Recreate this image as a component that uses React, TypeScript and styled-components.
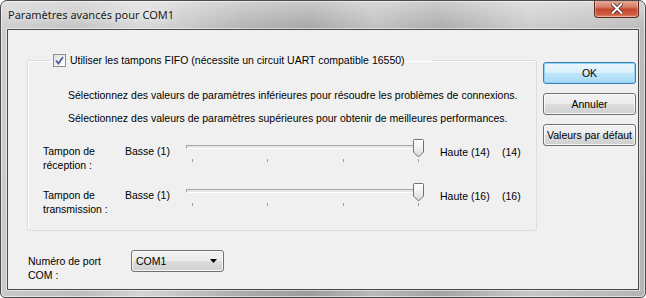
import React from 'react'
import styled, { createGlobalStyle } from 'styled-components'

const GlobalStyle = createGlobalStyle`
  html, body {
    margin: 0;
    padding: 0;
    background: #ffffff;
  }
  body {
    font-family: 'Liberation Sans', Arial, sans-serif;
    font-size: 10.5px;
    color: #000;
  }
`

const Window = styled.div`
  width: 646px;
  height: 298px;
  box-sizing: border-box;
  display: flex;
  flex-direction: column;
  border: 1px solid #4b4b4b;
  border-radius: 7px 7px 5px 5px;
  background:
    linear-gradient(180deg, rgba(255, 255, 255, 0.45) 0px, rgba(255, 255, 255, 0.1) 28px, rgba(255, 255, 255, 0) 100%),
    linear-gradient(90deg, #c9c9c9 0%, #bdbdbd 12%, #d4d4d4 22%, #aaaaaa 38%, #9d9d9d 48%, #b9b9b9 58%, #a3a3a3 68%, #c6c6c6 82%, #b4b4b4 100%);
  box-shadow: inset 0 0 0 1px rgba(255, 255, 255, 0.55);
  overflow: hidden;
`

const TitleBar = styled.div`
  height: 28px;
  flex-shrink: 0;
  display: flex;
  justify-content: space-between;
  align-items: flex-start;
  padding-left: 7px;
`

const Title = styled.span`
  margin-top: 6px;
  font-family: 'Noto Sans', 'Open Sans', sans-serif;
  font-size: 11px;
  color: #1a1a1a;
  text-shadow: 0 0 6px rgba(255, 255, 255, 0.9);
`

const CloseButton = styled.div`
  width: 45px;
  height: 18px;
  margin-top: -1px;
  margin-right: 6px;
  box-sizing: border-box;
  display: flex;
  align-items: center;
  justify-content: center;
  border: 1px solid #5b2a22;
  border-top: none;
  border-radius: 0 0 4px 4px;
  background: linear-gradient(180deg, #e9ad9d 0%, #d7806a 40%, #c4472e 55%, #cf5d40 85%, #e08c68 100%);
  box-shadow: inset 0 0 0 1px rgba(255, 255, 255, 0.35);
`

const Client = styled.div`
  flex: 1;
  min-height: 0;
  margin: 0 6px 7px 6px;
  display: flex;
  align-items: flex-start;
  gap: 6px;
  padding: 24px 2px 0 19px;
  border: 1px solid #4a4a4a;
  background: #f0f0f0;
  box-shadow: 0 0 0 1px rgba(255, 255, 255, 0.5);
  white-space: nowrap;
`

const MainColumn = styled.div`
  width: 510px;
  flex-shrink: 0;
  display: flex;
  flex-direction: column;
`

const GroupBox = styled.fieldset`
  margin: 0;
  padding: 0 0 14px 15px;
  border: 1px solid #d5dfe5;
  border-radius: 3px;
  box-shadow: inset 1px 1px 0 #ffffff;
`

const Legend = styled.legend`
  margin-left: 8px;
  padding: 0 27px 0 2px;
  display: flex;
  align-items: center;
  gap: 4px;
  height: 13px;
  line-height: 13px;
`

const CheckBox = styled.span`
  width: 13px;
  height: 13px;
  box-sizing: border-box;
  display: flex;
  align-items: center;
  justify-content: center;
  border: 1px solid #8e8f8f;
  background: linear-gradient(135deg, #dcdcdc 0%, #f4f4f4 60%, #ffffff 100%);
`

const Hint = styled.p<{ $gap: number }>`
  margin: ${(p) => p.$gap}px 0 0 25px;
  line-height: 14px;
`

const SliderRow = styled.div<{ $gap: number }>`
  margin-top: ${(p) => p.$gap}px;
  display: grid;
  grid-template-columns: 82px 61px 254px 62px auto;
  line-height: 14px;
`

const ValueText = styled.span`
  padding-top: 1px;
`

const SliderBox = styled.div`
  position: relative;
  width: 238px;
  height: 28px;
`

const Track = styled.div`
  margin-top: 1px;
  height: 2px;
  border-top: 1px solid #a7a7a7;
  border-left: 1px solid #a7a7a7;
  border-bottom: 1px solid #ffffff;
  border-right: 1px solid #ffffff;
  background: #e6e6e6;
`

const Ticks = styled.div`
  display: flex;
  justify-content: space-between;
  padding: 0 5px 0 6px;
  margin-top: 10px;
`

const Tick = styled.span`
  width: 1px;
  height: 3px;
  background: #a0a0a0;
`

const Thumb = styled.svg`
  position: absolute;
  top: -5px;
`

const ButtonColumn = styled.div`
  margin-top: 8px;
  display: flex;
  flex-direction: column;
  gap: 9px;
`

const Button = styled.button<{ $primary?: boolean }>`
  width: 93px;
  height: 22px;
  padding: 0;
  font-family: inherit;
  font-size: 10.5px;
  color: #000;
  border-radius: 3px;
  border: 1px solid ${(p) => (p.$primary ? '#3c7fb1' : '#707070')};
  background: ${(p) =>
    p.$primary
      ? 'linear-gradient(180deg, #eaf6fd 0%, #d9f0fc 50%, #bee6fd 51%, #a7d9f5 100%)'
      : 'linear-gradient(180deg, #f2f2f2 0%, #ebebeb 50%, #dddddd 51%, #cfcfcf 100%)'};
  box-shadow: inset 0 0 0 1px ${(p) => (p.$primary ? '#90d4f5' : 'rgba(255,255,255,0.8)')};
`

const PortRow = styled.div`
  margin-top: 19px;
  margin-left: 1px;
  display: flex;
  align-items: flex-start;
`

const PortLabel = styled.span`
  width: 103px;
  margin-top: 4px;
  line-height: 14px;
`

const Select = styled.div`
  width: 93px;
  height: 22px;
  box-sizing: border-box;
  display: flex;
  align-items: center;
  justify-content: space-between;
  padding: 0 6px 0 4px;
  border: 1px solid #707070;
  border-radius: 3px;
  background: linear-gradient(180deg, #f2f2f2 0%, #ebebeb 50%, #dddddd 51%, #cfcfcf 100%);
  box-shadow: inset 0 0 0 1px rgba(255, 255, 255, 0.8);
`

const Slider: React.FC<{ value: number; min: number; max: number }> = ({ value, min, max }) => {
  const left = 227 * ((value - min) / (max - min))
  return (
    <SliderBox>
      <Track />
      <Ticks>
        <Tick />
        <Tick />
        <Tick />
        <Tick />
      </Ticks>
      <Thumb width="11" height="19" viewBox="0 0 11 19" style={{ left }}>
        <defs>
          <linearGradient id="thumbGrad" x1="0" y1="0" x2="0" y2="1">
            <stop offset="0" stopColor="#ffffff" />
            <stop offset="0.5" stopColor="#f0f0f0" />
            <stop offset="1" stopColor="#d8d8d8" />
          </linearGradient>
        </defs>
        <path
          d="M1.5 0.5 H9.5 Q10.5 0.5 10.5 1.5 V13 L5.5 18 L0.5 13 V1.5 Q0.5 0.5 1.5 0.5 Z"
          fill="url(#thumbGrad)"
          stroke="#707070"
        />
      </Thumb>
    </SliderBox>
  )
}

const rows = [
  { top: 19, label: ['Tampon de', 'réception :'], max: 14 },
  { top: 16, label: ['Tampon de', 'transmission :'], max: 16 },
]

const App: React.FC = () => {
  return (
    <>
      <GlobalStyle />
      <Window>
        <TitleBar>
          <Title>Paramètres avancés pour COM1</Title>
          <CloseButton>
            <svg width="12" height="11" viewBox="0 0 12 11">
              <path
                d="M1.5 1 L10.5 10 M10.5 1 L1.5 10"
                stroke="#4a2018"
                strokeWidth="3.6"
                strokeLinecap="round"
              />
              <path
                d="M1.5 1 L10.5 10 M10.5 1 L1.5 10"
                stroke="#ffffff"
                strokeWidth="2"
                strokeLinecap="round"
              />
            </svg>
          </CloseButton>
        </TitleBar>
        <Client>
          <MainColumn>
            <GroupBox>
              <Legend>
                <CheckBox>
                  <svg width="9" height="9" viewBox="0 0 9 9">
                    <path d="M1 4.5 L3.5 7.5 L8 1" fill="none" stroke="#4a5f97" strokeWidth="1.8" />
                  </svg>
                </CheckBox>
                Utiliser les tampons FIFO (nécessite un circuit UART compatible 16550)
              </Legend>
              <Hint $gap={21}>
                Sélectionnez des valeurs de paramètres inférieures pour résoudre les problèmes de connexions.
              </Hint>
              <Hint $gap={9}>
                Sélectionnez des valeurs de paramètres supérieures pour obtenir de meilleures performances.
              </Hint>
              {rows.map((r) => (
                <SliderRow key={r.max} $gap={r.top}>
                  <span>
                    {r.label[0]}
                    <br />
                    {r.label[1]}
                  </span>
                  <span>Basse (1)</span>
                  <Slider value={r.max} min={1} max={r.max} />
                  <ValueText>Haute ({r.max})</ValueText>
                  <ValueText>({r.max})</ValueText>
                </SliderRow>
              ))}
            </GroupBox>
            <PortRow>
              <PortLabel>
                Numéro de port
                <br />
                COM :
              </PortLabel>
              <Select>
                <span>COM1</span>
                <svg width="7" height="4" viewBox="0 0 7 4">
                  <path d="M0 0 H7 L3.5 4 Z" fill="#000" />
                </svg>
              </Select>
            </PortRow>
          </MainColumn>
          <ButtonColumn>
            <Button $primary>OK</Button>
            <Button>Annuler</Button>
            <Button>Valeurs par défaut</Button>
          </ButtonColumn>
        </Client>
      </Window>
    </>
  )
}

export default App
